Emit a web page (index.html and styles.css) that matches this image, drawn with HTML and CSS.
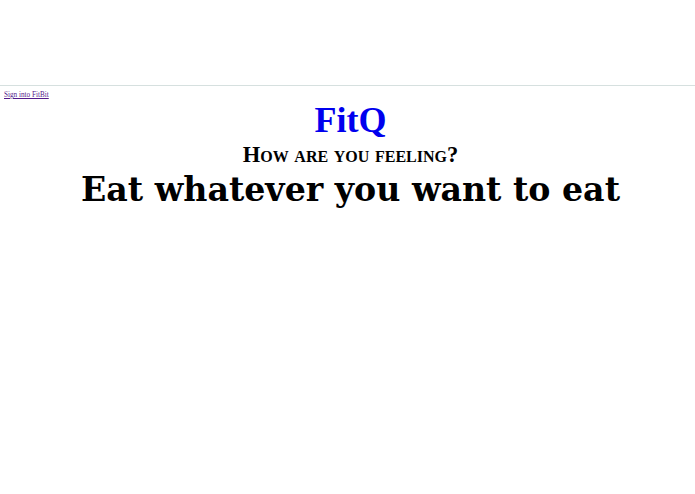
FILE: index.html
```html
<!DOCTYPE html>
<html>
<head>
<meta charset="utf-8">
<link rel="stylesheet" href="styles.css">
</head>
<body>
<div class="topbar"></div>
<div class="signin"><a href="#" class="signin-link">Sign into FitBit</a></div>
<main class="content">
  <h1 class="brand">FitQ</h1>
  <h2 class="question">How are you feeling?</h2>
  <h1 class="advice">Eat whatever you want to eat</h1>
</main>
</body>
</html>
```
FILE: styles.css
```css
html, body {
  margin: 0;
  padding: 0;
  background: #ffffff;
}
body {
  font-family: "Liberation Serif", serif;
}
.topbar {
  height: 85px;
  border-bottom: 1px solid #d6e0df;
}
.signin {
  padding: 4px 0 0 4px;
  font-size: 7.2px;
  line-height: 10px;
}
.signin-link {
  color: #551a8b;
}
.content {
  text-align: center;
  padding-left: 6px;
}
.brand {
  margin: 0;
  font-size: 36px;
  line-height: 40px;
  color: #0000ee;
  font-weight: bold;
}
.question {
  margin: 1px 0 0;
  font-size: 22.5px;
  line-height: 27px;
  font-variant: small-caps;
  font-weight: bold;
}
.advice {
  margin: 2px 0 0;
  font-family: "DejaVu Serif", serif;
  font-size: 33.2px;
  line-height: 40px;
  font-weight: bold;
}
```
